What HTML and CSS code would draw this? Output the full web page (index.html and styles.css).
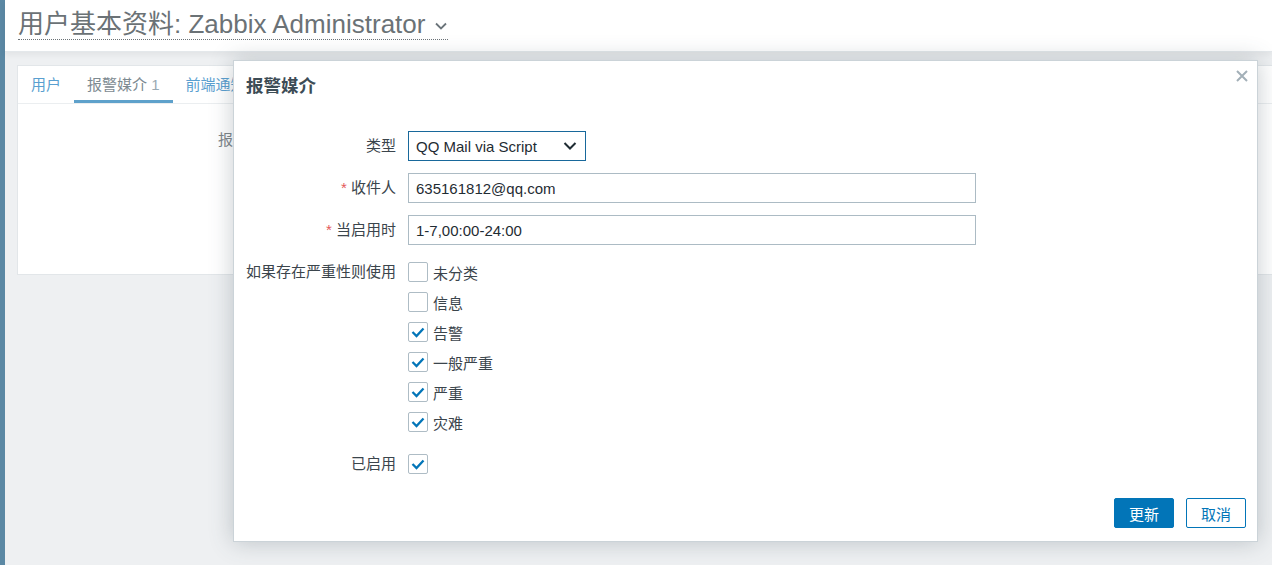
FILE: index.html
```html
<!DOCTYPE html>
<html lang="zh-CN">
<head>
    <meta charset="UTF-8">
    <title>用户基本资料</title>
    <link rel="stylesheet" href="styles.css">
</head>
<body>
    <div class="sidebar"></div>
    <div class="main">
        <header class="page-header">
            <h1 class="page-title">用户基本资料: Zabbix Administrator
                <svg class="title-arrow" width="14" height="10" viewBox="0 0 14 10"><path d="M2 2.5 L7 7.5 L12 2.5" fill="none" stroke="#6b747a" stroke-width="1.8"/></svg>
            </h1>
        </header>

        <div class="content">
            <div class="card">
                <ul class="tabs">
                    <li class="tab">用户</li>
                    <li class="tab active">报警媒介 <span class="count">1</span></li>
                    <li class="tab">前端通知</li>
                </ul>
                <div class="card-body">
                    <div class="card-label">报警媒介</div>
                </div>
            </div>
        </div>
    </div>

    <!-- 弹出窗口 -->
    <div class="dialog">
        <div class="dialog-head">
            <h2>报警媒介</h2>
            <svg class="close" width="12" height="12" viewBox="0 0 12 12"><path d="M1 1 L11 11 M11 1 L1 11" stroke="#a3b0b8" stroke-width="2"/></svg>
        </div>

        <div class="form">
            <label class="label">类型</label>
            <div class="field">
                <div class="select">QQ Mail via Script
                    <svg width="14" height="10" viewBox="0 0 14 10"><path d="M1.5 2 L7 7.5 L12.5 2" fill="none" stroke="#1f2c33" stroke-width="2"/></svg>
                </div>
            </div>

            <label class="label"><span class="req">*</span> 收件人</label>
            <div class="field"><input class="text" type="text" value="635161812@qq.com"></div>

            <label class="label"><span class="req">*</span> 当启用时</label>
            <div class="field"><input class="text" type="text" value="1-7,00:00-24:00"></div>

            <label class="label">如果存在严重性则使用</label>
            <ul class="checks">
                <li><span class="box"></span>未分类</li>
                <li><span class="box"></span>信息</li>
                <li><span class="box on"><svg viewBox="0 0 18 18"><path d="M3.5 9 L7.5 13 L14.5 5.5" fill="none" stroke="#0275b8" stroke-width="2.3"/></svg></span>告警</li>
                <li><span class="box on"><svg viewBox="0 0 18 18"><path d="M3.5 9 L7.5 13 L14.5 5.5" fill="none" stroke="#0275b8" stroke-width="2.3"/></svg></span>一般严重</li>
                <li><span class="box on"><svg viewBox="0 0 18 18"><path d="M3.5 9 L7.5 13 L14.5 5.5" fill="none" stroke="#0275b8" stroke-width="2.3"/></svg></span>严重</li>
                <li><span class="box on"><svg viewBox="0 0 18 18"><path d="M3.5 9 L7.5 13 L14.5 5.5" fill="none" stroke="#0275b8" stroke-width="2.3"/></svg></span>灾难</li>
            </ul>

            <label class="label">已启用</label>
            <div class="field"><span class="box on"><svg viewBox="0 0 18 18"><path d="M3.5 9 L7.5 13 L14.5 5.5" fill="none" stroke="#0275b8" stroke-width="2.3"/></svg></span></div>
        </div>

        <div class="dialog-foot">
            <button class="btn primary">更新</button>
            <button class="btn">取消</button>
        </div>
    </div>
</body>
</html>
```

FILE: styles.css
```css
* {
    box-sizing: border-box;
}

body {
    margin: 0;
    height: 565px;
    overflow: hidden;
    display: flex;
    font-family: "Liberation Sans", Arial, "Noto Sans CJK SC", sans-serif;
    font-size: 15px;
    color: #3b454c;
    background-color: #eef0f2;
}

.sidebar {
    width: 5px;
    flex-shrink: 0;
    background-color: #5b88a4;
}

.main {
    flex: 1;
    min-width: 0;
}

.page-header {
    height: 52px;
    background-color: #fff;
    padding: 9px 0 0 13px;
    border-bottom: 1px solid #e4e8eb;
    box-shadow: 0 3px 6px rgba(0, 0, 0, 0.05);
}

.page-title {
    display: inline-flex;
    align-items: center;
    gap: 9px;
    margin: 0;
    font-size: 26px;
    font-weight: normal;
    line-height: 30px;
    color: #6b7276;
    border-bottom: 1px dotted #6b7276;
}

.title-arrow {
    margin-top: 4px;
}

.content {
    padding: 13px 0 0 12px;
}

.card {
    height: 210px;
    background-color: #fff;
    border: 1px solid #e2e6e9;
    border-right: none;
}

.tabs {
    display: flex;
    list-style: none;
    margin: 0;
    padding: 0;
    height: 38px;
    border-bottom: 1px solid #ebeef0;
}

.tab {
    padding: 3px 13px 0;
    line-height: 31px;
    color: #5a9fd0;
    border-bottom: 3px solid transparent;
}

.tab.active {
    color: #7d8a91;
    border-bottom-color: #5ea1cb;
}

.tab .count {
    color: #9aaab3;
}

.card-body {
    padding: 24px 0 0 200px;
}

.card-label {
    color: #7d8589;
}

/* 弹出窗口 */
.dialog {
    position: absolute;
    left: 233px;
    top: 60px;
    width: 1025px;
    height: 482px;
    display: flex;
    flex-direction: column;
    background-color: #fff;
    border: 1px solid #cbd3d8;
    box-shadow: 0 0 22px rgba(70, 85, 95, 0.3);
}

.dialog-head {
    position: relative;
    padding: 14px 12px 0;
    height: 52px;
}

.dialog-head h2 {
    margin: 0;
    font-size: 17.5px;
    line-height: 22px;
    font-weight: bold;
    color: #3d4c56;
}

.close {
    position: absolute;
    right: 9px;
    top: 9px;
}

.form {
    display: grid;
    grid-template-columns: 150px 1fr;
    column-gap: 12px;
    row-gap: 12px;
    padding: 18px 0 0 12px;
}

.label {
    text-align: right;
    line-height: 30px;
    color: #3b454c;
}

.req {
    color: #e45959;
}

.field {
    display: flex;
    align-items: center;
    height: 30px;
}

.select {
    width: 178px;
    height: 30px;
    display: flex;
    align-items: center;
    justify-content: space-between;
    padding: 0 8px 0 7px;
    border: 1px solid #18689b;
    color: #1f2c33;
}

.text {
    width: 568px;
    height: 30px;
    padding: 0 7px;
    border: 1px solid #acbbc4;
    font-family: inherit;
    font-size: 15px;
    color: #1f2c33;
    outline: none;
}

.checks {
    list-style: none;
    margin: 0;
    padding: 0;
}

.checks li {
    display: flex;
    align-items: center;
    height: 30px;
    gap: 5px;
    color: #3b454c;
}

.box {
    width: 20px;
    height: 20px;
    flex-shrink: 0;
    border: 1px solid #aebcc5;
    border-radius: 2px;
    background-color: #fff;
}

.box svg {
    display: block;
    width: 18px;
    height: 18px;
}

.dialog-foot {
    margin-top: auto;
    display: flex;
    justify-content: flex-end;
    gap: 12px;
    padding: 0 11px 13px 0;
}

.btn {
    width: 60px;
    height: 30px;
    font-family: inherit;
    font-size: 15px;
    color: #0275b8;
    background-color: #fff;
    border: 1px solid #0275b8;
    border-radius: 2px;
    cursor: pointer;
}

.btn.primary {
    color: #fff;
    background-color: #0275b8;
}
```
